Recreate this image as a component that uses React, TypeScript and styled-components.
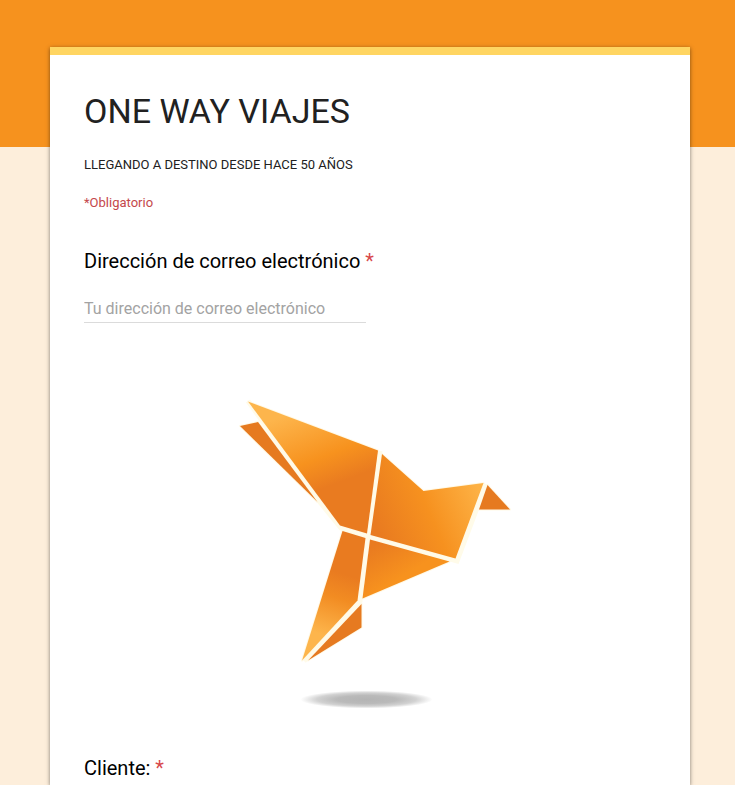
import React from "react";
import styled, { createGlobalStyle } from "styled-components";

const GlobalStyle = createGlobalStyle`
  *, *::before, *::after { box-sizing: border-box; }
  body {
    margin: 0;
    background: #fdeedb;
    font-family: Roboto, Arial, sans-serif;
    color: #000;
  }
`;

const Page = styled.main`
  display: flex;
  min-height: 100vh;
  padding: 47px 45px 0 50px;
  background: linear-gradient(#f6921e, #f6921e) top / 100% 147px no-repeat;
`;

const Card = styled.form`
  flex: 1;
  min-width: 0;
  padding: 33px 34px 0;
  background: #fff;
  border-top: 8px solid #ffd562;
  box-shadow: 0 1px 4px rgba(0, 0, 0, 0.5);
`;

const Title = styled.h1`
  margin: 0;
  font-size: 34px;
  line-height: 46px;
  font-weight: 400;
  color: #212121;
`;

const Description = styled.p`
  margin: 22px 0 0;
  font-size: 13px;
  line-height: 18px;
  color: #212121;
`;

const RequiredNote = styled.p`
  margin: 20px 0 0;
  font-size: 13px;
  line-height: 18px;
  color: #c4484b;
`;

const Question = styled.section`
  margin-top: 36px;
`;

const Label = styled.label`
  display: block;
  font-size: 20px;
  line-height: 27px;
`;

const QuestionTitle = styled.h2`
  margin: 30px 0 0;
  font-size: 20px;
  line-height: 27px;
  font-weight: 400;
`;

const Asterisk = styled.span`
  color: #d8484b;
`;

const EmailInput = styled.input`
  display: block;
  width: 282px;
  max-width: 100%;
  height: 28px;
  margin-top: 20px;
  padding: 0;
  border: 0;
  border-bottom: 1px solid #dbdbdb;
  background: transparent;
  font: 400 16px/24px Roboto, Arial, sans-serif;
  color: #212121;
  outline: none;

  &::placeholder {
    color: #a3a3a3;
    opacity: 1;
  }
`;

const Figure = styled.figure`
  display: flex;
  justify-content: center;
  margin: 62px 0 0;
`;

const Drawing = styled.svg`
  display: block;
  width: 320px;
  height: 340px;
`;

function Bird() {
  return (
    <Drawing viewBox="210 385 320 340" role="img" aria-label="Colibrí de origami">
      <defs>
        <linearGradient id="wing" gradientUnits="userSpaceOnUse" x1="280" y1="404" x2="324" y2="520">
          <stop offset="0.1" stopColor="#fdb54c" />
          <stop offset="0.52" stopColor="#f7921e" />
          <stop offset="0.76" stopColor="#e97b20" />
        </linearGradient>
        <linearGradient id="body" gradientUnits="userSpaceOnUse" x1="376" y1="526" x2="476" y2="483">
          <stop offset="0" stopColor="#e97b20" />
          <stop offset="0.5" stopColor="#f6911f" />
          <stop offset="1" stopColor="#fdb144" />
        </linearGradient>
        <linearGradient id="belly" gradientUnits="userSpaceOnUse" x1="370" y1="548" x2="396" y2="592">
          <stop offset="0" stopColor="#e97b20" />
          <stop offset="0.8" stopColor="#f7921e" />
        </linearGradient>
        <linearGradient id="tail" gradientUnits="userSpaceOnUse" x1="344" y1="574" x2="322" y2="642">
          <stop offset="0" stopColor="#e97b20" />
          <stop offset="0.35" stopColor="#f28c22" />
          <stop offset="0.9" stopColor="#fdb54c" />
        </linearGradient>
        <radialGradient id="shadow">
          <stop offset="0" stopColor="#b4b4b4" />
          <stop offset="0.45" stopColor="#bababa" />
          <stop offset="0.75" stopColor="#d2d2d2" />
          <stop offset="1" stopColor="#ffffff" />
        </radialGradient>
      </defs>
      <g stroke="#fffbe9" strokeWidth="5" fill="none">
        <path d="M248 401 319 501 341 528 457 561 486 484" />
        <path d="M380 451 368 536 360 601 304 661" />
      </g>
      <g stroke="#fff9e6" strokeWidth="2" strokeLinejoin="round" paintOrder="stroke">
        <path d="M248 401.5 378 450.5 367 533.5 340 525.5Z" fill="url(#wing)" />
        <path d="M240 426 258 422 317.500 502Z" fill="#e67a20" />
        <path d="M382 454 423.500 491 483.500 483 455.500 558.500 370.500 535Z" fill="url(#body)" />
        <path d="M487.500 485 510 509.500H479Z" fill="#e67a20" />
        <path d="M370 539.500 449.500 561.500 362.500 598.500Z" fill="url(#belly)" />
        <path d="M342.500 531 365.500 538 357.500 600.500 302 660.500Z" fill="url(#tail)" />
        <path d="M361.500 604V627.500L308 660.500Z" fill="#e67a20" />
      </g>
      <ellipse cx="366.500" cy="699.500" rx="66" ry="9" fill="url(#shadow)" />
    </Drawing>
  );
}

export default function App() {
  return (
    <>
      <GlobalStyle />
      <Page>
        <Card>
          <Title>ONE WAY VIAJES</Title>
          <Description>LLEGANDO A DESTINO DESDE HACE 50 AÑOS</Description>
          <RequiredNote>*Obligatorio</RequiredNote>
          <Question>
            <Label htmlFor="email">
              Dirección de correo electrónico <Asterisk>*</Asterisk>
            </Label>
            <EmailInput
              id="email"
              type="email"
              placeholder="Tu dirección de correo electrónico"
              required
            />
          </Question>
          <Figure>
            <Bird />
          </Figure>
          <QuestionTitle>
            Cliente: <Asterisk>*</Asterisk>
          </QuestionTitle>
        </Card>
      </Page>
    </>
  );
}
